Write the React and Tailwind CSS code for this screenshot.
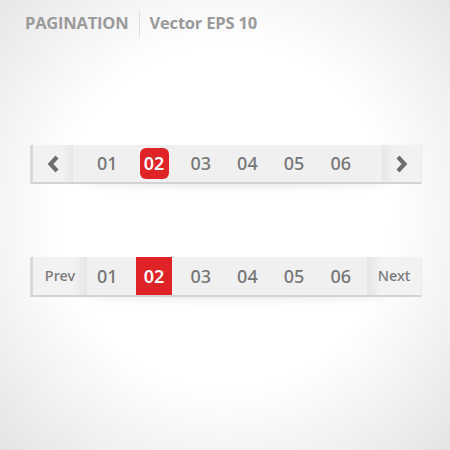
import React from "react";

const pages = ["01", "02", "03", "04", "05", "06"];

function Chevron({ dir }) {
  const d = dir === "left" ? "M11 2 L4.5 9 L11 16" : "M3 2 L9.5 9 L3 16";
  return (
    <svg width="14" height="18" viewBox="0 0 14 18" fill="none">
      <path d={d} stroke="#6e6e6e" strokeWidth="4.2" strokeLinejoin="miter" strokeLinecap="butt" />
    </svg>
  );
}

function Bar({ children, height }) {
  return (
    <div className="relative ml-[30px] w-[391px]">
      <div className="absolute left-[50px] right-[30px] bottom-[-2px] h-[8px] rounded-[50%] bg-[#000]/10 blur-[4px]" />
      <div
        className={`relative flex ${height} bg-[#f0f0f0] border-l-[3px] border-l-[#d9d9d9] border-b-[2px] border-b-[#d3d3d3] shadow-[1px_0_1px_rgba(0,0,0,0.06)]`}
      >
        {children}
      </div>
    </div>
  );
}

export default function App() {
  return (
    <div
      className="w-[450px] h-[450px] overflow-hidden flex flex-col bg-[radial-gradient(ellipse_at_50%_48%,#ffffff_52%,#f4f4f4_72%,#e4e4e4_100%)]"
      style={{ fontFamily: '"Noto Sans", "Open Sans", sans-serif' }}
    >
      {/* heading */}
      <div
        className="flex items-center pl-[25px] pt-[11px] h-[36px] text-[#9a9a9a] text-[16.5px] font-bold tracking-[-0.2px]"
        style={{ fontFamily: '"Open Sans", "Noto Sans", sans-serif' }}
      >
        <span>PAGINATION</span>
        <span className="mx-[10px] w-px h-[26px] bg-[#dedede]" />
        <span>Vector EPS 10</span>
      </div>

      {/* arrows pagination */}
      <div className="mt-[109px]">
        <Bar height="h-[39px]">
          <div className="w-[40px] flex items-center justify-center bg-[linear-gradient(to_right,#f2f2f2_70%,#e6e6e6)]">
            <Chevron dir="left" />
          </div>
          <div className="flex-1 flex items-center pl-[11px]">
            {pages.map((p) =>
              p === "02" ? (
                <div key={p} className="w-[46.7px] flex justify-center">
                  <span className="w-[29px] h-[31px] rounded-[6px] bg-[#e02327] text-white flex items-center justify-center text-[18px] font-semibold">
                    {p}
                  </span>
                </div>
              ) : (
                <span key={p} className="w-[46.7px] text-center text-[18px] font-medium text-[#767676]">
                  {p}
                </span>
              )
            )}
          </div>
          <div className="w-[39px] flex items-center justify-center bg-[linear-gradient(to_right,#e6e6e6,#f2f2f2_30%)]">
            <Chevron dir="right" />
          </div>
        </Bar>
      </div>

      {/* text pagination */}
      <div className="mt-[73px]">
        <Bar height="h-[40px]">
          <div className="w-[54px] flex items-center justify-center text-[14.5px] font-medium text-[#7a7a7a] bg-[linear-gradient(to_right,#f2f2f2_75%,#e5e5e5)]">
            Prev
          </div>
          <div className="flex-1 flex -ml-[3px] mr-[1px]">
            {pages.map((p) =>
              p === "02" ? (
                <div key={p} className="w-[46.7px] flex justify-center">
                  <span className="w-[36px] h-full bg-[#e02327] text-white flex items-center justify-center text-[18px] font-semibold">
                    {p}
                  </span>
                </div>
              ) : (
                <span key={p} className="w-[46.7px] flex items-center justify-center text-[18px] font-medium text-[#767676]">
                  {p}
                </span>
              )
            )}
          </div>
          <div className="w-[54px] flex items-center justify-center text-[14.5px] font-medium text-[#7a7a7a] bg-[linear-gradient(to_right,#e5e5e5,#f2f2f2_25%)]">
            Next
          </div>
        </Bar>
      </div>
    </div>
  );
}
